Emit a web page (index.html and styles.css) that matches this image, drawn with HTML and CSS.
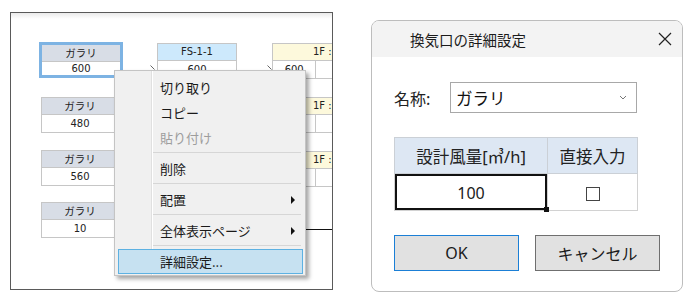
FILE: index.html
```html
<!DOCTYPE html>
<html lang="ja">
<head>
<meta charset="UTF-8">
<link rel="stylesheet" href="styles.css">
<title>換気口の詳細設定</title>
</head>
<body>
<div class="screen">
  <div class="canvas">
    <div class="node node-sel n1">
      <div class="node-head">ガラリ</div>
      <div class="node-val">600</div>
    </div>
    <div class="node n2">
      <div class="node-head">ガラリ</div>
      <div class="node-val">480</div>
    </div>
    <div class="node n3">
      <div class="node-head">ガラリ</div>
      <div class="node-val">560</div>
    </div>
    <div class="node n4">
      <div class="node-head">ガラリ</div>
      <div class="node-val">10</div>
    </div>

    <div class="node fs">
      <div class="node-head">FS-1-1</div>
      <div class="node-val">600</div>
    </div>

    <div class="node floor f1">
      <div class="node-head">1F :</div>
      <div class="node-val cells"><span>600</span><span></span><span></span></div>
    </div>
    <div class="node floor f2">
      <div class="node-head">1F :</div>
      <div class="node-val cells"><span></span><span></span><span></span></div>
    </div>
    <div class="node floor f3">
      <div class="node-head">1F :</div>
      <div class="node-val cells"><span></span><span></span><span></span></div>
    </div>

    <svg class="tick t1" width="6" height="6" viewBox="0 0 6 6"><path d="M0.5 0.5 L4.5 4.5" stroke="#666" stroke-width="1" fill="none"/></svg>
    <svg class="tick t2" width="6" height="6" viewBox="0 0 6 6"><path d="M0.5 0.5 L4.5 4.5" stroke="#666" stroke-width="1" fill="none"/></svg>
    <div class="wire"></div>

    <div class="ctx-menu">
      <div class="mi">切り取り</div>
      <div class="mi">コピー</div>
      <div class="mi disabled">貼り付け</div>
      <div class="sep"></div>
      <div class="mi">削除</div>
      <div class="sep"></div>
      <div class="mi">配置<span class="sub-arrow"></span></div>
      <div class="sep"></div>
      <div class="mi">全体表示ページ<span class="sub-arrow"></span></div>
      <div class="sep"></div>
      <div class="mi active">詳細設定...</div>
    </div>
  </div>

  <div class="dialog">
    <div class="dlg-title">
      <span>換気口の詳細設定</span>
      <svg width="14" height="14" viewBox="0 0 14 14"><path d="M1 1 L13 13 M13 1 L1 13" stroke="#222" stroke-width="1.2" fill="none"/></svg>
    </div>
    <div class="dlg-body">
      <div class="name-row">
        <label for="name">名称:</label>
        <div class="select" id="name">
          <span>ガラリ</span>
          <svg width="8" height="5" viewBox="0 0 8 5"><path d="M1 1 L4 4 L7 1" stroke="#777" stroke-width="1" fill="none"/></svg>
        </div>
      </div>

      <table class="grid">
        <thead>
          <tr>
            <th class="c1">設計風量[㎥/h]</th>
            <th class="c2">直接入力</th>
          </tr>
        </thead>
        <tbody>
          <tr>
            <td class="c1"><div class="editing">100<span class="handle"></span></div></td>
            <td class="c2"><span class="check"></span></td>
          </tr>
        </tbody>
      </table>

      <div class="buttons">
        <button type="button" class="btn btn-ok">OK</button>
        <button type="button" class="btn">キャンセル</button>
      </div>
    </div>
  </div>
</div>
</body>
</html>
```

FILE: styles.css
```css
body {
  margin: 0;
  background: #fff;
  font-family: "Noto Sans CJK JP", sans-serif;
  color: #1e1e1e;
}

.screen {
  display: flex;
  align-items: flex-start;
  width: 694px;
  height: 302px;
}

/* diagram canvas */
.canvas {
  position: relative;
  margin: 12px 0 0 10px;
  width: 323px;
  height: 278px;
  box-sizing: border-box;
  border: 1px solid #5a5a5a;
  background: linear-gradient(#ebebeb, #fff 6px);
  overflow: hidden;
}

.node {
  position: absolute;
  width: 78px;
  box-sizing: border-box;
  border: 1px solid #c6c6c6;
  background: #fff;
  text-align: center;
  color: #222;
}

.node-head {
  height: 16px;
  line-height: 16px;
  background: #d8dde6;
  border-bottom: 1px solid #c6c6c6;
  font-size: 10.5px;
}

.node-val {
  height: 17px;
  line-height: 17px;
  font-family: "DejaVu Sans", sans-serif;
  font-size: 10px;
}

.node-sel {
  border: 3px solid #7db3e3;
}

.node-sel .node-val {
  height: 13px;
  line-height: 13px;
}

.n1 { left: 28px; top: 29px; width: 84px; }
.n2 { left: 30px; top: 84px; }
.n3 { left: 30px; top: 137px; }
.n4 { left: 30px; top: 189px; }

.fs {
  left: 146px;
  top: 30px;
  width: 80px;
}

.fs .node-head {
  background: #cde9fc;
  font-family: "DejaVu Sans", sans-serif;
  font-size: 10px;
}

.floor {
  left: 261px;
  width: 80px;
}

.floor .node-head {
  background: #fdf9dc;
  text-align: left;
  padding-left: 40px;
  font-family: "DejaVu Sans", sans-serif;
  font-size: 10px;
}

.f1 { top: 30px; }
.f2 { top: 84px; }
.f3 { top: 138px; }

.cells {
  display: flex;
}

.cells span {
  width: 20px;
  border-right: 1px solid #c6c6c6;
}

.cells span:first-child {
  width: 52px;
}

.tick {
  position: absolute;
}

.t1 { left: 139px; top: 52px; }
.t2 { left: 256px; top: 52px; }

.wire {
  position: absolute;
  left: 240px;
  right: 0;
  top: 216px;
  height: 1px;
  background: #111;
}

/* context menu */
.ctx-menu {
  position: absolute;
  left: 103px;
  top: 57px;
  width: 192px;
  box-sizing: border-box;
  padding: 4px 0 1px;
  border: 1px solid #c4c4c4;
  background: linear-gradient(to right, #f0f0f0 36px, #e0e0e0 36px, #e0e0e0 37px, #fff 37px, #fff 38px, #f0f0f0 38px);
  box-shadow: 3px 3px 4px rgba(0, 0, 0, 0.35);
  font-size: 13px;
}

.mi {
  display: flex;
  align-items: center;
  justify-content: space-between;
  height: 25px;
  padding: 0 10px 0 45px;
  color: #1a1a1a;
}

.mi.disabled {
  color: #9d9d9d;
}

.mi.active {
  box-sizing: border-box;
  margin: 0 2px 0 3px;
  padding-left: 41px;
  border: 1px solid #5db1e2;
  background: #c6e1f1;
}

.sub-arrow {
  width: 0;
  height: 0;
  border-top: 4px solid transparent;
  border-bottom: 4px solid transparent;
  border-left: 4px solid #111;
}

.sep {
  height: 1px;
  margin: 2px 4px 3px 38px;
  background: #d6d6d6;
}

/* dialog */
.dialog {
  margin: 20px 0 0 38px;
  width: 312px;
  height: 272px;
  box-sizing: border-box;
  border: 1px solid #bdbdbd;
  border-radius: 8px;
  overflow: hidden;
  background: #fff;
  font-family: "Noto Sans", "Noto Sans CJK JP", sans-serif;
}

.dlg-title {
  display: flex;
  align-items: center;
  justify-content: space-between;
  height: 36px;
  padding: 0 10px 0 38px;
  background: #f3f3f3;
  font-family: "Noto Sans CJK JP", sans-serif;
  font-size: 14.5px;
  color: #1b1b1b;
}

.dlg-body {
  padding: 25px 0 0 22px;
}

.name-row {
  display: flex;
  align-items: center;
  height: 31px;
}

.name-row label {
  width: 56px;
  font-family: "Noto Sans CJK JP", sans-serif;
  font-size: 16px;
  color: #222;
}

.select {
  display: flex;
  align-items: center;
  justify-content: space-between;
  width: 187px;
  height: 31px;
  box-sizing: border-box;
  padding: 0 9px 0 5px;
  border: 1px solid #a8a8a8;
  font-family: "Noto Sans CJK JP", sans-serif;
  font-size: 16.5px;
  color: #111;
}

.grid {
  margin-top: 24px;
  border-collapse: collapse;
  border: 1px solid #d2d2d2;
  font-size: 16.5px;
}

.grid th {
  height: 35px;
  padding: 0;
  background: #dde7f3;
  border: 1px solid #cbd0d6;
  font-weight: normal;
  color: #222;
}

.grid td {
  height: 36px;
  padding: 0;
  border: 1px solid #d2d2d2;
  text-align: center;
}

.grid .c1 { width: 152px; }
.grid .c2 { width: 89px; }

.editing {
  position: relative;
  height: 36px;
  line-height: 34px;
  box-sizing: border-box;
  border: 2px solid #111;
  font-size: 16px;
  color: #1a1a1a;
}

.handle {
  position: absolute;
  right: -4px;
  bottom: -4px;
  width: 5px;
  height: 5px;
  background: #111;
}

.check {
  display: inline-block;
  width: 14px;
  height: 14px;
  box-sizing: border-box;
  border: 1px solid #444;
  vertical-align: middle;
}

.buttons {
  display: flex;
  gap: 16px;
  margin-top: 24px;
}

.btn {
  width: 125px;
  height: 36px;
  background: #e1e1e1;
  border: 1px solid #6f6f6f;
  font-family: "Noto Sans", "Noto Sans CJK JP", sans-serif;
  font-size: 16px;
  color: #1a1a1a;
}

.btn-ok {
  border-color: #1b7fd6;
}
```
